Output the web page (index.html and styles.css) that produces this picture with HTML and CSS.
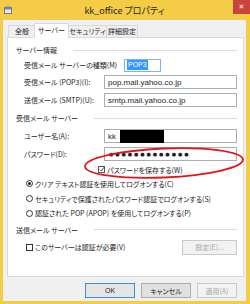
FILE: index.html
```html
<!DOCTYPE html>
<html>
<head>
    <title>kk_office プロパティ</title>
    <link rel="stylesheet" href="styles.css">
</head>
<body>

<div class="window">
    <div class="titlebar">
        <span class="app-icon">
            <svg width="8" height="8" viewBox="0 0 8 8">
                <rect x="0.5" y="1.5" width="7" height="6" fill="#e8e8e8" stroke="#7a7a7a"/>
                <rect x="1" y="2" width="6" height="1.5" fill="#5b8ec9"/>
                <rect x="2" y="0" width="4" height="1.5" fill="#9a9a9a"/>
            </svg>
        </span>
        <span class="title">kk_office プロパティ</span>
        <span class="close">✕</span>
    </div>

    <div class="frame">
        <div class="client">
            <div class="tabs">
                <div class="tab t1">全般</div>
                <div class="tab t2 active">サーバー</div>
                <div class="tab t3">セキュリティ</div>
                <div class="tab t4">詳細設定</div>
            </div>

            <div class="panel">
                <div class="group-title">サーバー情報</div>
                <div class="row kind">
                    <span class="label wide">受信メール サーバーの種類(M)</span>
                    <span class="pop3"><span class="sel">POP3</span></span>
                </div>
                <div class="row">
                    <span class="label">受信メール (POP3)(I):</span>
                    <span class="field">pop.mail.yahoo.co.jp</span>
                </div>
                <div class="row">
                    <span class="label">送信メール (SMTP)(U):</span>
                    <span class="field">smtp.mail.yahoo.co.jp</span>
                </div>

                <div class="group-title mid">受信メール サーバー</div>
                <div class="row">
                    <span class="label">ユーザー名(A):</span>
                    <span class="field">kk<span class="redact"></span></span>
                </div>
                <div class="row">
                    <span class="label">パスワード(D):</span>
                    <span class="field dots">●●●●●●●●●●●●●</span>
                </div>
                <div class="row save">
                    <span class="check checked">
                        <svg width="7" height="7" viewBox="0 0 7 7"><path d="M1 3.5 L3 5.5 L6.5 0.5" fill="none" stroke="#222" stroke-width="1"/></svg>
                    </span>
                    <span>パスワードを保存する(W)</span>
                </div>
                <div class="row radio-row">
                    <span class="radio on"></span>
                    <span>クリア テキスト認証を使用してログオンする(C)</span>
                </div>
                <div class="row radio-row">
                    <span class="radio"></span>
                    <span>セキュリティで保護されたパスワード認証でログオンする(S)</span>
                </div>
                <div class="row radio-row last">
                    <span class="radio"></span>
                    <span>認証された POP (APOP) を使用してログオンする(P)</span>
                </div>

                <div class="group-title out">送信メール サーバー</div>
                <div class="row auth">
                    <span class="check"></span>
                    <span>このサーバーは認証が必要(V)</span>
                    <span class="btn disabled small">設定(E)...</span>
                </div>

                <svg class="mark" width="164" height="36" viewBox="0 0 164 36">
                    <ellipse cx="82" cy="18" rx="79" ry="14.5" fill="none" stroke="#e3151c" stroke-width="1.8" transform="rotate(-2.5 82 18)"/>
                </svg>
            </div>

            <div class="actions">
                <span class="btn default">OK</span>
                <span class="btn">キャンセル</span>
                <span class="btn disabled narrow">適用(A)</span>
            </div>
        </div>
    </div>
</div>

</body>
</html>
```

FILE: styles.css
```css
:root {
    --frame: #f4cc48;
    --face: #f0f0f0;
    --line: #d9d9d9;
    --edit: #abadb3;
    --text: #1e1e1e;
}

body {
    margin: 0;
    font-family: "Noto Sans CJK JP", "Liberation Sans", sans-serif;
    font-feature-settings: "palt";
    font-size: 7px;
    color: var(--text);
}

.window {
    width: 250px;
    height: 304px;
    background: var(--frame);
    overflow: hidden;
}

/* title bar */
.titlebar {
    height: 20px;
    display: flex;
    align-items: flex-start;
}

.app-icon {
    width: 8px;
    height: 8px;
    margin: 6px 0 0 4px;
    display: flex;
}

.title {
    flex: 1;
    text-align: center;
    font-size: 9px;
    line-height: 22px;
    margin-left: 4px;
}

.close {
    width: 17px;
    height: 14px;
    background: #c9443e;
    color: #fff;
    font-size: 7px;
    line-height: 14px;
    text-align: center;
    font-family: "DejaVu Sans", sans-serif;
}

/* frame + client area */
.frame {
    padding: 0 4px 3px 3px;
}

.client {
    height: 281px;
    background: var(--face);
    padding: 3px 2px 0 4px;
    box-sizing: border-box;
}

.tabs {
    display: flex;
    align-items: flex-end;
    height: 14px;
    padding-left: 1px;
    position: relative;
    z-index: 1;
}

.tab {
    height: 12px;
    box-sizing: border-box;
    border: 1px solid var(--line);
    border-bottom: none;
    background: #f0f0f0;
    line-height: 11px;
    text-align: center;
    margin-right: -1px;
    white-space: nowrap;
}

.t1 { width: 28px; }
.t2 { width: 35px; }
.t3 { width: 39px; }
.t4 { width: 32px; }

.tab.active {
    height: 15px;
    margin: 0 -1px -1px -1px;
    background: #fff;
    line-height: 13px;
}

.panel {
    position: relative;
    height: 240px;
    box-sizing: border-box;
    border: 1px solid var(--line);
    background: #fff;
    padding: 5px 6px 0 8px;
}

.group-title {
    height: 14px;
    display: flex;
    align-items: center;
    white-space: nowrap;
}

.group-title::after {
    content: "";
    flex: 1;
    height: 1px;
    background: #dcdcdc;
    margin-left: 16px;
}

.group-title.mid {
    height: 18px;
}

.group-title.out {
    height: 19px;
}

.row {
    height: 18px;
    display: flex;
    align-items: center;
    margin-left: 8px;
    white-space: nowrap;
}

.row.kind {
    height: 16px;
}

.label {
    width: 80px;
    flex: none;
}

.label.wide {
    width: 100px;
}

.pop3 {
    width: 37px;
    height: 13px;
    box-sizing: border-box;
    border: 1px solid #7eb4ea;
    display: flex;
    align-items: center;
    padding-left: 2px;
    font-family: "Liberation Sans", sans-serif;
}

.sel {
    background: #3399ff;
    color: #fff;
    line-height: 10px;
    padding: 0 1px;
}

.field {
    width: 133px;
    height: 14px;
    box-sizing: border-box;
    border: 1px solid var(--edit);
    background: #fff;
    padding-left: 3px;
    display: flex;
    align-items: center;
    font-family: "Liberation Sans", sans-serif;
    font-size: 8px;
}

.redact {
    display: inline-block;
    width: 44px;
    height: 13px;
    background: #000;
    margin-left: 4px;
    align-self: flex-start;
}

.dots {
    font-family: "DejaVu Sans", sans-serif;
    font-size: 5px;
    letter-spacing: 1.9px;
    padding-left: 4px;
}

.row.save {
    height: 13px;
    margin-left: 82px;
    gap: 2px;
}

.check {
    width: 7px;
    height: 7px;
    box-sizing: border-box;
    border: 1px solid #333;
    background: #fff;
    display: flex;
    flex: none;
}

.check.checked {
    border-color: #555;
}

.check svg {
    margin: -1px 0 0 -0.5px;
}

.radio-row {
    height: 15px;
    gap: 2px;
}

.radio-row.last {
    height: 14px;
}

.radio {
    width: 7px;
    height: 7px;
    box-sizing: border-box;
    border: 1px solid #333;
    border-radius: 50%;
    margin-left: 2px;
    flex: none;
    display: flex;
    align-items: center;
    justify-content: center;
}

.radio.on::after {
    content: "";
    width: 3px;
    height: 3px;
    border-radius: 50%;
    background: #222;
}

.row.auth {
    height: 16px;
    gap: 2px;
    padding-left: 2px;
}

/* buttons */
.btn {
    width: 50px;
    height: 15px;
    box-sizing: border-box;
    border: 1px solid #adadad;
    background: #e1e1e1;
    display: flex;
    align-items: center;
    justify-content: center;
}

.btn.default {
    border-color: #3c8fd9;
    background: #e5e5e5;
    font-family: "Liberation Sans", sans-serif;
}

.btn.disabled {
    border-color: #cacaca;
    background: #f2f2f2;
    color: #a6a6a6;
}

.btn.small {
    width: 55px;
    margin-left: auto;
}

.btn.narrow {
    width: 40px;
}

.actions {
    display: flex;
    justify-content: flex-end;
    gap: 6px;
    margin-top: 6px;
    padding-right: 7px;
}

/* red marker drawn over the password field */
.mark {
    position: absolute;
    left: 74px;
    top: 107px;
}
```
